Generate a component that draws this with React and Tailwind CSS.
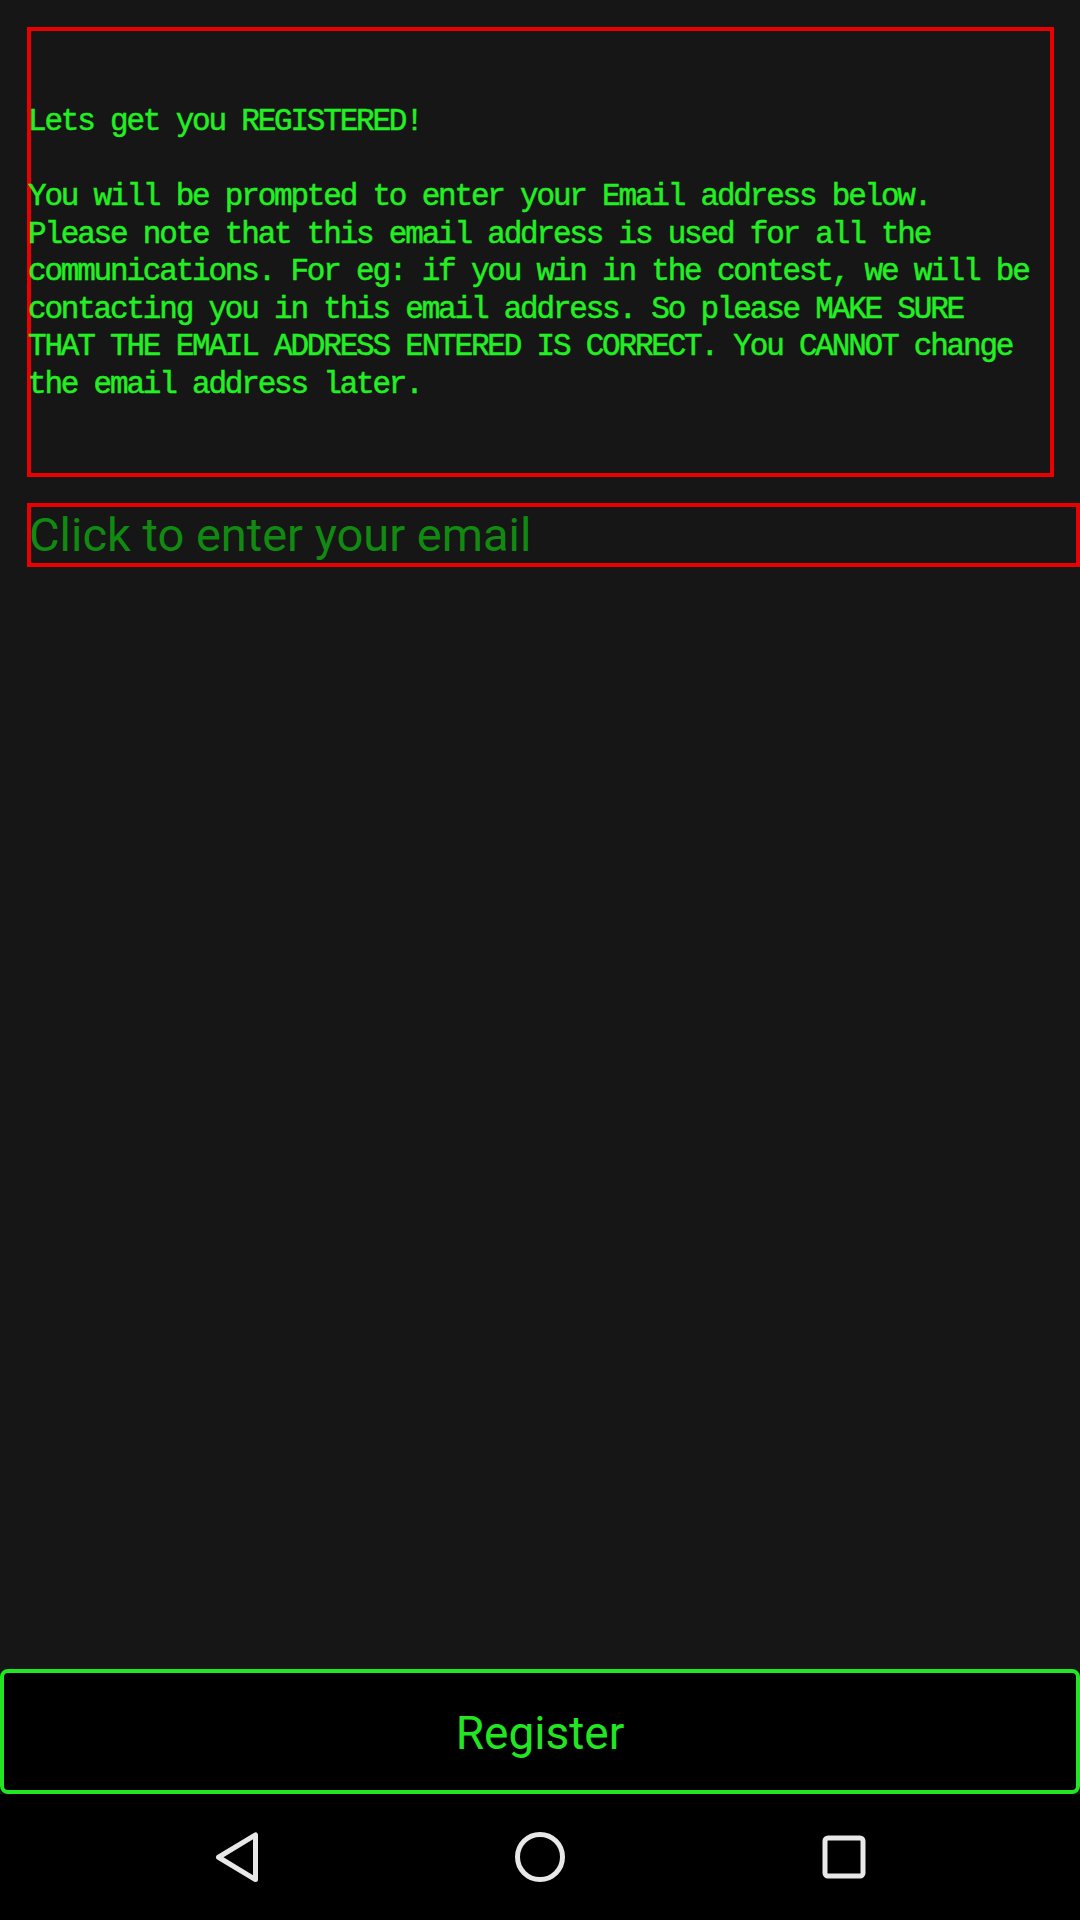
import React from "react";

const lines = [
  "Lets get you REGISTERED!",
  "",
  "You will be prompted to enter your Email address below.",
  "Please note that this email address is used for all the",
  "communications. For eg: if you win in the contest, we will be",
  "contacting you in this email address. So please MAKE SURE",
  "THAT THE EMAIL ADDRESS ENTERED IS CORRECT. You CANNOT change",
  "the email address later.",
];

export default function App() {
  return (
    <div className="w-[1080px] h-[1920px] bg-[#161616] flex flex-col overflow-hidden">
      <div className="flex-1 flex flex-col pt-[27px]">
        <div
          className="ml-[27px] w-[1027px] h-[450px] border-4 border-[#ea0000] pt-[72px] pl-0 text-[#22f022] text-[31px] leading-[37.5px] tracking-[-2.2px] whitespace-pre [-webkit-text-stroke:0.5px_#22f022]"
          style={{ fontFamily: '"Liberation Mono", "Courier New", monospace' }}
        >
          {lines.map((l, i) => (
            <div key={i} className="h-[37.5px] -ml-[3px]">{l}</div>
          ))}
        </div>
        <div className="mt-[26px] ml-[27px] w-[1053px] h-[64px] border-4 border-[#ea0000] flex items-center">
          <span
            className="-ml-[2px] text-[47px] leading-[56px] text-[#118a11]"
            style={{ fontFamily: 'Roboto, "Noto Sans", sans-serif' }}
          >
            Click to enter your email
          </span>
        </div>
        <div className="mt-auto h-[125px] border-4 border-[#22e622] rounded-[8px] bg-black flex items-center justify-center">
          <span
            className="text-[46px] text-[#22e622] leading-none pt-[2px]"
            style={{ fontFamily: 'Roboto, "Noto Sans", sans-serif' }}
          >
            Register
          </span>
        </div>
      </div>
      <div className="h-[126px] bg-black flex items-center justify-center gap-[184px]">
        <div className="w-[120px] h-[60px] flex items-center justify-center">
          <svg width="60" height="60" viewBox="0 0 60 60">
            <path
              d="M49.5 8 L49.5 52.5 L12.5 30.25 Z"
              fill="none"
              stroke="#e8e8e8"
              strokeWidth="5"
              strokeLinejoin="round"
            />
          </svg>
        </div>
        <div className="w-[120px] h-[60px] flex items-center justify-center">
          <svg width="60" height="60" viewBox="0 0 60 60">
            <circle cx="30" cy="30" r="22.5" fill="none" stroke="#e8e8e8" strokeWidth="5" />
          </svg>
        </div>
        <div className="w-[120px] h-[60px] flex items-center justify-center">
          <svg width="60" height="60" viewBox="0 0 60 60">
            <rect x="11" y="11" width="38" height="38" rx="3" fill="none" stroke="#e8e8e8" strokeWidth="5" />
          </svg>
        </div>
      </div>
    </div>
  );
}
